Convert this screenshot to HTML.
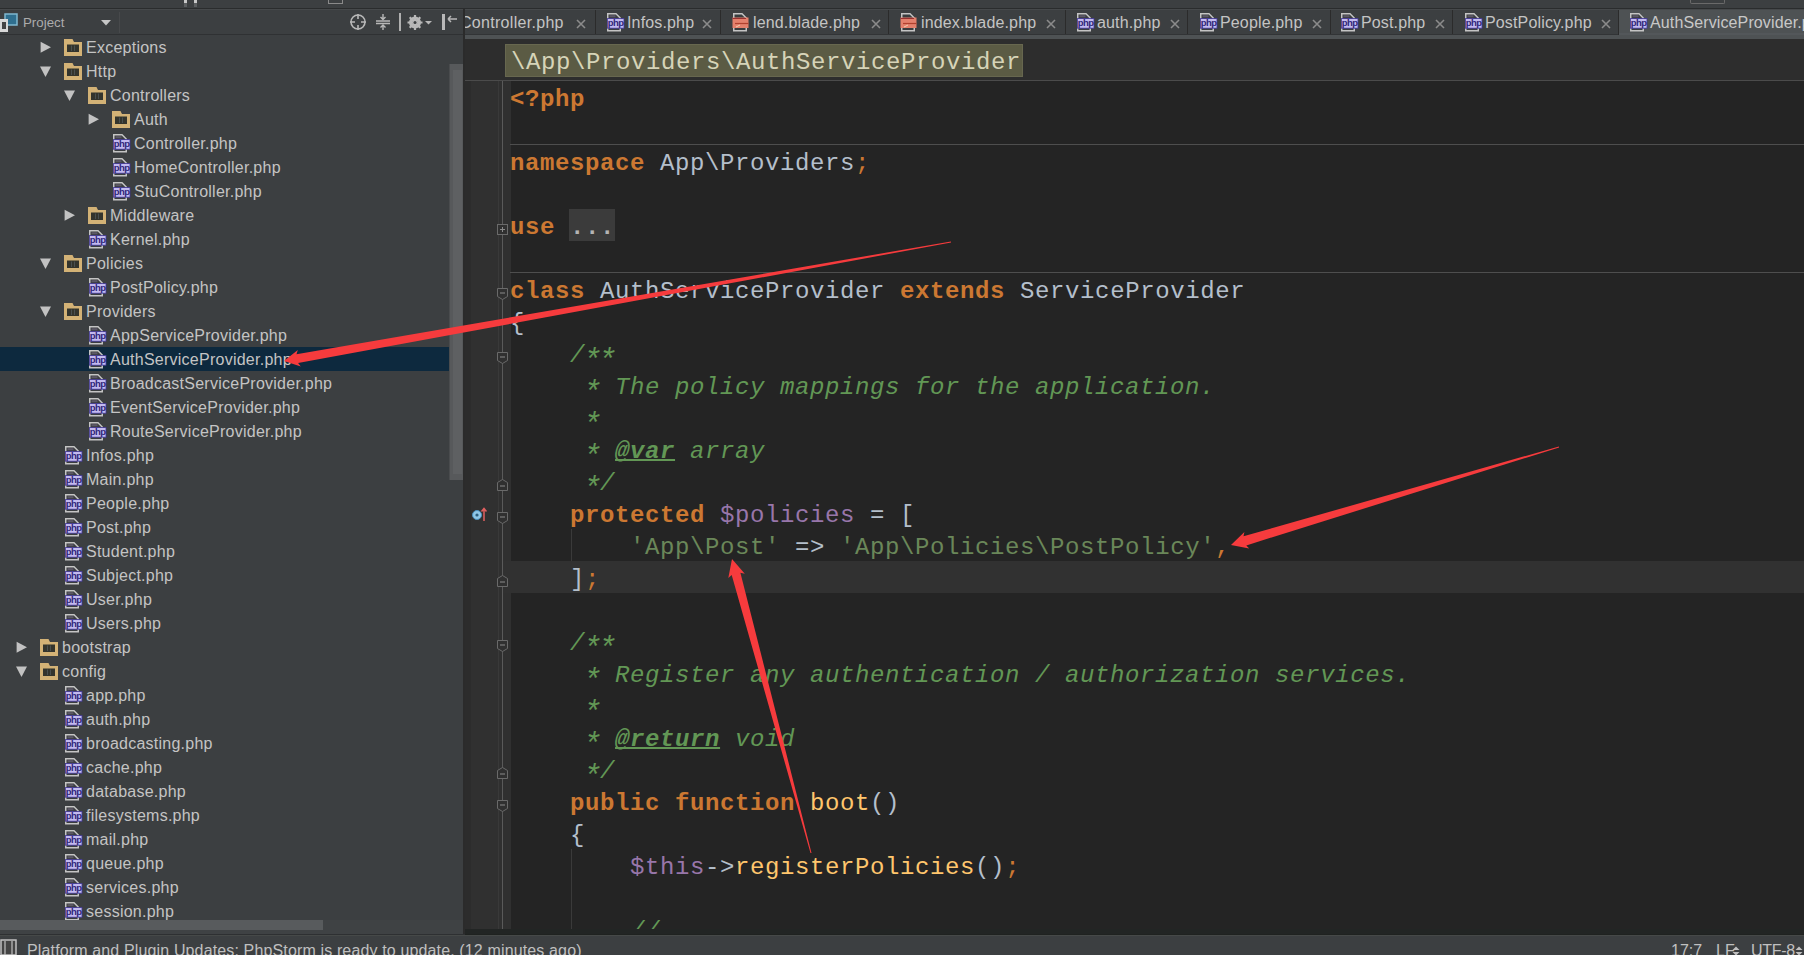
<!DOCTYPE html><html><head><meta charset="utf-8"><style>
*{margin:0;padding:0;box-sizing:border-box}
html,body{width:1804px;height:955px;overflow:hidden}
body{background:#3c3f41;position:relative;font-family:"Liberation Sans",sans-serif;color:#bbbbbb}
.a{position:absolute;display:block}
.t{position:absolute;white-space:pre;font-size:16px;line-height:20px}
.c{position:absolute;left:511px;white-space:pre;font-family:"Liberation Mono",monospace;font-size:24px;letter-spacing:0.6px;line-height:32px;height:32px;color:#b4bfcb}
.k{color:#cc7832;font-weight:bold}
.p{color:#cc7832}
.d{color:#629755;font-style:italic}
.dt{color:#629755;font-style:italic;font-weight:bold;text-decoration:underline;text-decoration-skip-ink:none;text-underline-offset:1px}
.s{color:#6a8759}
.v{color:#9876aa}
.f{color:#ffc66d}
.st{display:inline-block;width:15.003px;text-align:center;transform:translateY(6px) scale(1.3)}
</style></head><body>

<div class="a" style="left:0;top:0;width:1804px;height:8px;background:#3c3f41"></div>
<div class="a" style="left:0;top:8px;width:1804px;height:1px;background:#2a2c2d"></div>
<div class="a" style="left:184px;top:0;width:3px;height:3px;background:#c8c8c8"></div>
<div class="a" style="left:184px;top:3px;width:3px;height:4px;background:#5c5f61"></div>
<div class="a" style="left:194px;top:0;width:3px;height:3px;background:#c8c8c8"></div>
<div class="a" style="left:194px;top:3px;width:3px;height:4px;background:#5c5f61"></div>
<div class="a" style="left:328px;top:0;width:15px;height:4px;border:1px solid #8a8a8a;border-top:none"></div>
<div class="a" style="left:1690px;top:0;width:35px;height:4px;border:1px solid #6a6a6a;border-top:none;border-radius:0 0 2px 2px"></div>
<div class="a" style="left:0;top:9px;width:463px;height:26px;background:#3c3f41;border-top:1px solid #46494b;border-bottom:1px solid #2f3133"></div>
<svg class="a" style="left:0;top:13px" width="18" height="20" viewBox="0 0 18 20"><rect x="5" y="1" width="12" height="11" fill="#2f6f8f" stroke="#7fb8d0" stroke-width="1.5"/><rect x="0" y="6" width="8" height="13" fill="#d8d8d8"/><rect x="2" y="9" width="4" height="7" fill="#444"/></svg>
<div class="t" style="left:23px;top:13px;font-size:13.3px;color:#acacac">Project</div>
<svg class="a" style="left:101px;top:20px" width="10" height="6" viewBox="0 0 10 6"><path d="M0 0H10L5 5.5Z" fill="#c6c6c6"/></svg>
<div class="a" style="left:119px;top:12px;width:1px;height:21px;background:#47494b"></div>
<svg class="a" style="left:349px;top:13px" width="18" height="18" viewBox="0 0 18 18"><circle cx="9" cy="9" r="7" fill="none" stroke="#b8b8b8" stroke-width="1.6"/><path d="M9 1V6M9 12V17M1 9H6M12 9H17" stroke="#b8b8b8" stroke-width="1.6"/></svg>
<svg class="a" style="left:375px;top:13px" width="16" height="18" viewBox="0 0 16 18"><path d="M1 8H15M1 10.5H15" stroke="#b8b8b8" stroke-width="1.4"/><path d="M8 1V6M5.5 4L8 6.5L10.5 4M8 17V12.5M5.5 14.5L8 12L10.5 14.5" stroke="#b8b8b8" stroke-width="1.4" fill="none"/></svg>
<div class="a" style="left:399px;top:13px;width:2px;height:18px;background:#b0b0b0"></div>
<svg class="a" style="left:407px;top:14px" width="26" height="17" viewBox="0 0 26 17"><circle cx="8" cy="8.5" r="4.5" fill="none" stroke="#b8b8b8" stroke-width="3"/><path d="M8 1V16M0.5 8.5H15.5M2.7 3.2L13.3 13.8M13.3 3.2L2.7 13.8" stroke="#b8b8b8" stroke-width="2.2"/><circle cx="8" cy="8.5" r="1.5" fill="#3c3f41"/><path d="M18 7H25L21.5 10.5Z" fill="#b8b8b8"/></svg>
<svg class="a" style="left:441px;top:13px" width="17" height="18" viewBox="0 0 17 18"><rect x="1" y="1" width="3" height="16" fill="#b8b8b8"/><path d="M7 6H16M7 6L10 3M7 6L10 9" stroke="#b8b8b8" stroke-width="1.5" fill="none"/></svg>
<div class="a" style="left:0;top:35px;width:449px;height:885px;overflow:hidden">
<svg class="a" style="left:40px;top:6px" width="12" height="13" viewBox="0 0 12 13"><path d="M0.6 0.7L11 6.2L0.6 11.7Z" fill="#c2c2c2"/></svg>
<svg class="a" style="left:64px;top:4px" width="18" height="17" viewBox="0 0 18 17"><path d="M0 0H8.5L10 3H18V17H0Z" fill="#d3b276"/><rect x="3" y="5.5" width="12" height="7.5" fill="#33342d"/><rect x="7" y="6.5" width="1" height="5.5" fill="#4a5050"/><rect x="10" y="6.5" width="1" height="5.5" fill="#4a5050"/></svg>
<div class="t" style="left:86px;top:3px;color:#c4c4c4;letter-spacing:0.25px">Exceptions</div>
<svg class="a" style="left:40px;top:31px" width="12" height="12" viewBox="0 0 12 12"><path d="M0 0.6H11L5.5 11Z" fill="#c2c2c2"/></svg>
<svg class="a" style="left:64px;top:28px" width="18" height="17" viewBox="0 0 18 17"><path d="M0 0H8.5L10 3H18V17H0Z" fill="#d3b276"/><rect x="3" y="5.5" width="12" height="7.5" fill="#33342d"/><rect x="7" y="6.5" width="1" height="5.5" fill="#4a5050"/><rect x="10" y="6.5" width="1" height="5.5" fill="#4a5050"/></svg>
<div class="t" style="left:86px;top:27px;color:#c4c4c4;letter-spacing:0.25px">Http</div>
<svg class="a" style="left:64px;top:55px" width="12" height="12" viewBox="0 0 12 12"><path d="M0 0.6H11L5.5 11Z" fill="#c2c2c2"/></svg>
<svg class="a" style="left:88px;top:52px" width="18" height="17" viewBox="0 0 18 17"><path d="M0 0H8.5L10 3H18V17H0Z" fill="#d3b276"/><rect x="3" y="5.5" width="12" height="7.5" fill="#33342d"/><rect x="7" y="6.5" width="1" height="5.5" fill="#4a5050"/><rect x="10" y="6.5" width="1" height="5.5" fill="#4a5050"/></svg>
<div class="t" style="left:110px;top:51px;color:#c4c4c4;letter-spacing:0.25px">Controllers</div>
<svg class="a" style="left:88px;top:78px" width="12" height="13" viewBox="0 0 12 13"><path d="M0.6 0.7L11 6.2L0.6 11.7Z" fill="#c2c2c2"/></svg>
<svg class="a" style="left:112px;top:76px" width="18" height="17" viewBox="0 0 18 17"><path d="M0 0H8.5L10 3H18V17H0Z" fill="#d3b276"/><rect x="3" y="5.5" width="12" height="7.5" fill="#33342d"/><rect x="7" y="6.5" width="1" height="5.5" fill="#4a5050"/><rect x="10" y="6.5" width="1" height="5.5" fill="#4a5050"/></svg>
<div class="t" style="left:134px;top:75px;color:#c4c4c4;letter-spacing:0.25px">Auth</div>
<svg class="a" style="left:111px;top:98px" width="20" height="20" viewBox="0 0 20 20"><path d="M2.75 1.75H11L15.25 6V18.75H2.75Z" fill="#3a3d3f" stroke="#c4c4c4" stroke-width="1.5"/><rect x="4.5" y="3.2" width="6" height="2" fill="#5c5866"/><rect x="2.4" y="6.6" width="16.6" height="9.6" fill="#c3baf0" stroke="#3f3594" stroke-width="0.8"/><text x="10.7" y="14.4" font-family="Liberation Sans" font-size="9.5" font-weight="bold" fill="#30277a" text-anchor="middle" letter-spacing="-0.5">php</text></svg>
<div class="t" style="left:134px;top:99px;color:#c4c4c4;letter-spacing:0.25px">Controller.php</div>
<svg class="a" style="left:111px;top:122px" width="20" height="20" viewBox="0 0 20 20"><path d="M2.75 1.75H11L15.25 6V18.75H2.75Z" fill="#3a3d3f" stroke="#c4c4c4" stroke-width="1.5"/><rect x="4.5" y="3.2" width="6" height="2" fill="#5c5866"/><rect x="2.4" y="6.6" width="16.6" height="9.6" fill="#c3baf0" stroke="#3f3594" stroke-width="0.8"/><text x="10.7" y="14.4" font-family="Liberation Sans" font-size="9.5" font-weight="bold" fill="#30277a" text-anchor="middle" letter-spacing="-0.5">php</text></svg>
<div class="t" style="left:134px;top:123px;color:#c4c4c4;letter-spacing:0.25px">HomeController.php</div>
<svg class="a" style="left:111px;top:146px" width="20" height="20" viewBox="0 0 20 20"><path d="M2.75 1.75H11L15.25 6V18.75H2.75Z" fill="#3a3d3f" stroke="#c4c4c4" stroke-width="1.5"/><rect x="4.5" y="3.2" width="6" height="2" fill="#5c5866"/><rect x="2.4" y="6.6" width="16.6" height="9.6" fill="#c3baf0" stroke="#3f3594" stroke-width="0.8"/><text x="10.7" y="14.4" font-family="Liberation Sans" font-size="9.5" font-weight="bold" fill="#30277a" text-anchor="middle" letter-spacing="-0.5">php</text></svg>
<div class="t" style="left:134px;top:147px;color:#c4c4c4;letter-spacing:0.25px">StuController.php</div>
<svg class="a" style="left:64px;top:174px" width="12" height="13" viewBox="0 0 12 13"><path d="M0.6 0.7L11 6.2L0.6 11.7Z" fill="#c2c2c2"/></svg>
<svg class="a" style="left:88px;top:172px" width="18" height="17" viewBox="0 0 18 17"><path d="M0 0H8.5L10 3H18V17H0Z" fill="#d3b276"/><rect x="3" y="5.5" width="12" height="7.5" fill="#33342d"/><rect x="7" y="6.5" width="1" height="5.5" fill="#4a5050"/><rect x="10" y="6.5" width="1" height="5.5" fill="#4a5050"/></svg>
<div class="t" style="left:110px;top:171px;color:#c4c4c4;letter-spacing:0.25px">Middleware</div>
<svg class="a" style="left:87px;top:194px" width="20" height="20" viewBox="0 0 20 20"><path d="M2.75 1.75H11L15.25 6V18.75H2.75Z" fill="#3a3d3f" stroke="#c4c4c4" stroke-width="1.5"/><rect x="4.5" y="3.2" width="6" height="2" fill="#5c5866"/><rect x="2.4" y="6.6" width="16.6" height="9.6" fill="#c3baf0" stroke="#3f3594" stroke-width="0.8"/><text x="10.7" y="14.4" font-family="Liberation Sans" font-size="9.5" font-weight="bold" fill="#30277a" text-anchor="middle" letter-spacing="-0.5">php</text></svg>
<div class="t" style="left:110px;top:195px;color:#c4c4c4;letter-spacing:0.25px">Kernel.php</div>
<svg class="a" style="left:40px;top:223px" width="12" height="12" viewBox="0 0 12 12"><path d="M0 0.6H11L5.5 11Z" fill="#c2c2c2"/></svg>
<svg class="a" style="left:64px;top:220px" width="18" height="17" viewBox="0 0 18 17"><path d="M0 0H8.5L10 3H18V17H0Z" fill="#d3b276"/><rect x="3" y="5.5" width="12" height="7.5" fill="#33342d"/><rect x="7" y="6.5" width="1" height="5.5" fill="#4a5050"/><rect x="10" y="6.5" width="1" height="5.5" fill="#4a5050"/></svg>
<div class="t" style="left:86px;top:219px;color:#c4c4c4;letter-spacing:0.25px">Policies</div>
<svg class="a" style="left:87px;top:242px" width="20" height="20" viewBox="0 0 20 20"><path d="M2.75 1.75H11L15.25 6V18.75H2.75Z" fill="#3a3d3f" stroke="#c4c4c4" stroke-width="1.5"/><rect x="4.5" y="3.2" width="6" height="2" fill="#5c5866"/><rect x="2.4" y="6.6" width="16.6" height="9.6" fill="#c3baf0" stroke="#3f3594" stroke-width="0.8"/><text x="10.7" y="14.4" font-family="Liberation Sans" font-size="9.5" font-weight="bold" fill="#30277a" text-anchor="middle" letter-spacing="-0.5">php</text></svg>
<div class="t" style="left:110px;top:243px;color:#c4c4c4;letter-spacing:0.25px">PostPolicy.php</div>
<svg class="a" style="left:40px;top:271px" width="12" height="12" viewBox="0 0 12 12"><path d="M0 0.6H11L5.5 11Z" fill="#c2c2c2"/></svg>
<svg class="a" style="left:64px;top:268px" width="18" height="17" viewBox="0 0 18 17"><path d="M0 0H8.5L10 3H18V17H0Z" fill="#d3b276"/><rect x="3" y="5.5" width="12" height="7.5" fill="#33342d"/><rect x="7" y="6.5" width="1" height="5.5" fill="#4a5050"/><rect x="10" y="6.5" width="1" height="5.5" fill="#4a5050"/></svg>
<div class="t" style="left:86px;top:267px;color:#c4c4c4;letter-spacing:0.25px">Providers</div>
<svg class="a" style="left:87px;top:290px" width="20" height="20" viewBox="0 0 20 20"><path d="M2.75 1.75H11L15.25 6V18.75H2.75Z" fill="#3a3d3f" stroke="#c4c4c4" stroke-width="1.5"/><rect x="4.5" y="3.2" width="6" height="2" fill="#5c5866"/><rect x="2.4" y="6.6" width="16.6" height="9.6" fill="#c3baf0" stroke="#3f3594" stroke-width="0.8"/><text x="10.7" y="14.4" font-family="Liberation Sans" font-size="9.5" font-weight="bold" fill="#30277a" text-anchor="middle" letter-spacing="-0.5">php</text></svg>
<div class="t" style="left:110px;top:291px;color:#c4c4c4;letter-spacing:0.25px">AppServiceProvider.php</div>
<div class="a" style="left:0;top:312px;width:449px;height:24px;background:#0d293e"></div>
<svg class="a" style="left:87px;top:314px" width="20" height="20" viewBox="0 0 20 20"><path d="M2.75 1.75H11L15.25 6V18.75H2.75Z" fill="#3a3d3f" stroke="#c4c4c4" stroke-width="1.5"/><rect x="4.5" y="3.2" width="6" height="2" fill="#5c5866"/><rect x="2.4" y="6.6" width="16.6" height="9.6" fill="#c3baf0" stroke="#3f3594" stroke-width="0.8"/><text x="10.7" y="14.4" font-family="Liberation Sans" font-size="9.5" font-weight="bold" fill="#30277a" text-anchor="middle" letter-spacing="-0.5">php</text></svg>
<div class="t" style="left:110px;top:315px;color:#c4c4c4;letter-spacing:0.25px">AuthServiceProvider.php</div>
<svg class="a" style="left:87px;top:338px" width="20" height="20" viewBox="0 0 20 20"><path d="M2.75 1.75H11L15.25 6V18.75H2.75Z" fill="#3a3d3f" stroke="#c4c4c4" stroke-width="1.5"/><rect x="4.5" y="3.2" width="6" height="2" fill="#5c5866"/><rect x="2.4" y="6.6" width="16.6" height="9.6" fill="#c3baf0" stroke="#3f3594" stroke-width="0.8"/><text x="10.7" y="14.4" font-family="Liberation Sans" font-size="9.5" font-weight="bold" fill="#30277a" text-anchor="middle" letter-spacing="-0.5">php</text></svg>
<div class="t" style="left:110px;top:339px;color:#c4c4c4;letter-spacing:0.25px">BroadcastServiceProvider.php</div>
<svg class="a" style="left:87px;top:362px" width="20" height="20" viewBox="0 0 20 20"><path d="M2.75 1.75H11L15.25 6V18.75H2.75Z" fill="#3a3d3f" stroke="#c4c4c4" stroke-width="1.5"/><rect x="4.5" y="3.2" width="6" height="2" fill="#5c5866"/><rect x="2.4" y="6.6" width="16.6" height="9.6" fill="#c3baf0" stroke="#3f3594" stroke-width="0.8"/><text x="10.7" y="14.4" font-family="Liberation Sans" font-size="9.5" font-weight="bold" fill="#30277a" text-anchor="middle" letter-spacing="-0.5">php</text></svg>
<div class="t" style="left:110px;top:363px;color:#c4c4c4;letter-spacing:0.25px">EventServiceProvider.php</div>
<svg class="a" style="left:87px;top:386px" width="20" height="20" viewBox="0 0 20 20"><path d="M2.75 1.75H11L15.25 6V18.75H2.75Z" fill="#3a3d3f" stroke="#c4c4c4" stroke-width="1.5"/><rect x="4.5" y="3.2" width="6" height="2" fill="#5c5866"/><rect x="2.4" y="6.6" width="16.6" height="9.6" fill="#c3baf0" stroke="#3f3594" stroke-width="0.8"/><text x="10.7" y="14.4" font-family="Liberation Sans" font-size="9.5" font-weight="bold" fill="#30277a" text-anchor="middle" letter-spacing="-0.5">php</text></svg>
<div class="t" style="left:110px;top:387px;color:#c4c4c4;letter-spacing:0.25px">RouteServiceProvider.php</div>
<svg class="a" style="left:63px;top:410px" width="20" height="20" viewBox="0 0 20 20"><path d="M2.75 1.75H11L15.25 6V18.75H2.75Z" fill="#3a3d3f" stroke="#c4c4c4" stroke-width="1.5"/><rect x="4.5" y="3.2" width="6" height="2" fill="#5c5866"/><rect x="2.4" y="6.6" width="16.6" height="9.6" fill="#c3baf0" stroke="#3f3594" stroke-width="0.8"/><text x="10.7" y="14.4" font-family="Liberation Sans" font-size="9.5" font-weight="bold" fill="#30277a" text-anchor="middle" letter-spacing="-0.5">php</text></svg>
<div class="t" style="left:86px;top:411px;color:#c4c4c4;letter-spacing:0.25px">Infos.php</div>
<svg class="a" style="left:63px;top:434px" width="20" height="20" viewBox="0 0 20 20"><path d="M2.75 1.75H11L15.25 6V18.75H2.75Z" fill="#3a3d3f" stroke="#c4c4c4" stroke-width="1.5"/><rect x="4.5" y="3.2" width="6" height="2" fill="#5c5866"/><rect x="2.4" y="6.6" width="16.6" height="9.6" fill="#c3baf0" stroke="#3f3594" stroke-width="0.8"/><text x="10.7" y="14.4" font-family="Liberation Sans" font-size="9.5" font-weight="bold" fill="#30277a" text-anchor="middle" letter-spacing="-0.5">php</text></svg>
<div class="t" style="left:86px;top:435px;color:#c4c4c4;letter-spacing:0.25px">Main.php</div>
<svg class="a" style="left:63px;top:458px" width="20" height="20" viewBox="0 0 20 20"><path d="M2.75 1.75H11L15.25 6V18.75H2.75Z" fill="#3a3d3f" stroke="#c4c4c4" stroke-width="1.5"/><rect x="4.5" y="3.2" width="6" height="2" fill="#5c5866"/><rect x="2.4" y="6.6" width="16.6" height="9.6" fill="#c3baf0" stroke="#3f3594" stroke-width="0.8"/><text x="10.7" y="14.4" font-family="Liberation Sans" font-size="9.5" font-weight="bold" fill="#30277a" text-anchor="middle" letter-spacing="-0.5">php</text></svg>
<div class="t" style="left:86px;top:459px;color:#c4c4c4;letter-spacing:0.25px">People.php</div>
<svg class="a" style="left:63px;top:482px" width="20" height="20" viewBox="0 0 20 20"><path d="M2.75 1.75H11L15.25 6V18.75H2.75Z" fill="#3a3d3f" stroke="#c4c4c4" stroke-width="1.5"/><rect x="4.5" y="3.2" width="6" height="2" fill="#5c5866"/><rect x="2.4" y="6.6" width="16.6" height="9.6" fill="#c3baf0" stroke="#3f3594" stroke-width="0.8"/><text x="10.7" y="14.4" font-family="Liberation Sans" font-size="9.5" font-weight="bold" fill="#30277a" text-anchor="middle" letter-spacing="-0.5">php</text></svg>
<div class="t" style="left:86px;top:483px;color:#c4c4c4;letter-spacing:0.25px">Post.php</div>
<svg class="a" style="left:63px;top:506px" width="20" height="20" viewBox="0 0 20 20"><path d="M2.75 1.75H11L15.25 6V18.75H2.75Z" fill="#3a3d3f" stroke="#c4c4c4" stroke-width="1.5"/><rect x="4.5" y="3.2" width="6" height="2" fill="#5c5866"/><rect x="2.4" y="6.6" width="16.6" height="9.6" fill="#c3baf0" stroke="#3f3594" stroke-width="0.8"/><text x="10.7" y="14.4" font-family="Liberation Sans" font-size="9.5" font-weight="bold" fill="#30277a" text-anchor="middle" letter-spacing="-0.5">php</text></svg>
<div class="t" style="left:86px;top:507px;color:#c4c4c4;letter-spacing:0.25px">Student.php</div>
<svg class="a" style="left:63px;top:530px" width="20" height="20" viewBox="0 0 20 20"><path d="M2.75 1.75H11L15.25 6V18.75H2.75Z" fill="#3a3d3f" stroke="#c4c4c4" stroke-width="1.5"/><rect x="4.5" y="3.2" width="6" height="2" fill="#5c5866"/><rect x="2.4" y="6.6" width="16.6" height="9.6" fill="#c3baf0" stroke="#3f3594" stroke-width="0.8"/><text x="10.7" y="14.4" font-family="Liberation Sans" font-size="9.5" font-weight="bold" fill="#30277a" text-anchor="middle" letter-spacing="-0.5">php</text></svg>
<div class="t" style="left:86px;top:531px;color:#c4c4c4;letter-spacing:0.25px">Subject.php</div>
<svg class="a" style="left:63px;top:554px" width="20" height="20" viewBox="0 0 20 20"><path d="M2.75 1.75H11L15.25 6V18.75H2.75Z" fill="#3a3d3f" stroke="#c4c4c4" stroke-width="1.5"/><rect x="4.5" y="3.2" width="6" height="2" fill="#5c5866"/><rect x="2.4" y="6.6" width="16.6" height="9.6" fill="#c3baf0" stroke="#3f3594" stroke-width="0.8"/><text x="10.7" y="14.4" font-family="Liberation Sans" font-size="9.5" font-weight="bold" fill="#30277a" text-anchor="middle" letter-spacing="-0.5">php</text></svg>
<div class="t" style="left:86px;top:555px;color:#c4c4c4;letter-spacing:0.25px">User.php</div>
<svg class="a" style="left:63px;top:578px" width="20" height="20" viewBox="0 0 20 20"><path d="M2.75 1.75H11L15.25 6V18.75H2.75Z" fill="#3a3d3f" stroke="#c4c4c4" stroke-width="1.5"/><rect x="4.5" y="3.2" width="6" height="2" fill="#5c5866"/><rect x="2.4" y="6.6" width="16.6" height="9.6" fill="#c3baf0" stroke="#3f3594" stroke-width="0.8"/><text x="10.7" y="14.4" font-family="Liberation Sans" font-size="9.5" font-weight="bold" fill="#30277a" text-anchor="middle" letter-spacing="-0.5">php</text></svg>
<div class="t" style="left:86px;top:579px;color:#c4c4c4;letter-spacing:0.25px">Users.php</div>
<svg class="a" style="left:16px;top:606px" width="12" height="13" viewBox="0 0 12 13"><path d="M0.6 0.7L11 6.2L0.6 11.7Z" fill="#c2c2c2"/></svg>
<svg class="a" style="left:40px;top:604px" width="18" height="17" viewBox="0 0 18 17"><path d="M0 0H8.5L10 3H18V17H0Z" fill="#d3b276"/><rect x="3" y="5.5" width="12" height="7.5" fill="#33342d"/><rect x="7" y="6.5" width="1" height="5.5" fill="#4a5050"/><rect x="10" y="6.5" width="1" height="5.5" fill="#4a5050"/></svg>
<div class="t" style="left:62px;top:603px;color:#c4c4c4;letter-spacing:0.25px">bootstrap</div>
<svg class="a" style="left:16px;top:631px" width="12" height="12" viewBox="0 0 12 12"><path d="M0 0.6H11L5.5 11Z" fill="#c2c2c2"/></svg>
<svg class="a" style="left:40px;top:628px" width="18" height="17" viewBox="0 0 18 17"><path d="M0 0H8.5L10 3H18V17H0Z" fill="#d3b276"/><rect x="3" y="5.5" width="12" height="7.5" fill="#33342d"/><rect x="7" y="6.5" width="1" height="5.5" fill="#4a5050"/><rect x="10" y="6.5" width="1" height="5.5" fill="#4a5050"/></svg>
<div class="t" style="left:62px;top:627px;color:#c4c4c4;letter-spacing:0.25px">config</div>
<svg class="a" style="left:63px;top:650px" width="20" height="20" viewBox="0 0 20 20"><path d="M2.75 1.75H11L15.25 6V18.75H2.75Z" fill="#3a3d3f" stroke="#c4c4c4" stroke-width="1.5"/><rect x="4.5" y="3.2" width="6" height="2" fill="#5c5866"/><rect x="2.4" y="6.6" width="16.6" height="9.6" fill="#c3baf0" stroke="#3f3594" stroke-width="0.8"/><text x="10.7" y="14.4" font-family="Liberation Sans" font-size="9.5" font-weight="bold" fill="#30277a" text-anchor="middle" letter-spacing="-0.5">php</text></svg>
<div class="t" style="left:86px;top:651px;color:#c4c4c4;letter-spacing:0.25px">app.php</div>
<svg class="a" style="left:63px;top:674px" width="20" height="20" viewBox="0 0 20 20"><path d="M2.75 1.75H11L15.25 6V18.75H2.75Z" fill="#3a3d3f" stroke="#c4c4c4" stroke-width="1.5"/><rect x="4.5" y="3.2" width="6" height="2" fill="#5c5866"/><rect x="2.4" y="6.6" width="16.6" height="9.6" fill="#c3baf0" stroke="#3f3594" stroke-width="0.8"/><text x="10.7" y="14.4" font-family="Liberation Sans" font-size="9.5" font-weight="bold" fill="#30277a" text-anchor="middle" letter-spacing="-0.5">php</text></svg>
<div class="t" style="left:86px;top:675px;color:#c4c4c4;letter-spacing:0.25px">auth.php</div>
<svg class="a" style="left:63px;top:698px" width="20" height="20" viewBox="0 0 20 20"><path d="M2.75 1.75H11L15.25 6V18.75H2.75Z" fill="#3a3d3f" stroke="#c4c4c4" stroke-width="1.5"/><rect x="4.5" y="3.2" width="6" height="2" fill="#5c5866"/><rect x="2.4" y="6.6" width="16.6" height="9.6" fill="#c3baf0" stroke="#3f3594" stroke-width="0.8"/><text x="10.7" y="14.4" font-family="Liberation Sans" font-size="9.5" font-weight="bold" fill="#30277a" text-anchor="middle" letter-spacing="-0.5">php</text></svg>
<div class="t" style="left:86px;top:699px;color:#c4c4c4;letter-spacing:0.25px">broadcasting.php</div>
<svg class="a" style="left:63px;top:722px" width="20" height="20" viewBox="0 0 20 20"><path d="M2.75 1.75H11L15.25 6V18.75H2.75Z" fill="#3a3d3f" stroke="#c4c4c4" stroke-width="1.5"/><rect x="4.5" y="3.2" width="6" height="2" fill="#5c5866"/><rect x="2.4" y="6.6" width="16.6" height="9.6" fill="#c3baf0" stroke="#3f3594" stroke-width="0.8"/><text x="10.7" y="14.4" font-family="Liberation Sans" font-size="9.5" font-weight="bold" fill="#30277a" text-anchor="middle" letter-spacing="-0.5">php</text></svg>
<div class="t" style="left:86px;top:723px;color:#c4c4c4;letter-spacing:0.25px">cache.php</div>
<svg class="a" style="left:63px;top:746px" width="20" height="20" viewBox="0 0 20 20"><path d="M2.75 1.75H11L15.25 6V18.75H2.75Z" fill="#3a3d3f" stroke="#c4c4c4" stroke-width="1.5"/><rect x="4.5" y="3.2" width="6" height="2" fill="#5c5866"/><rect x="2.4" y="6.6" width="16.6" height="9.6" fill="#c3baf0" stroke="#3f3594" stroke-width="0.8"/><text x="10.7" y="14.4" font-family="Liberation Sans" font-size="9.5" font-weight="bold" fill="#30277a" text-anchor="middle" letter-spacing="-0.5">php</text></svg>
<div class="t" style="left:86px;top:747px;color:#c4c4c4;letter-spacing:0.25px">database.php</div>
<svg class="a" style="left:63px;top:770px" width="20" height="20" viewBox="0 0 20 20"><path d="M2.75 1.75H11L15.25 6V18.75H2.75Z" fill="#3a3d3f" stroke="#c4c4c4" stroke-width="1.5"/><rect x="4.5" y="3.2" width="6" height="2" fill="#5c5866"/><rect x="2.4" y="6.6" width="16.6" height="9.6" fill="#c3baf0" stroke="#3f3594" stroke-width="0.8"/><text x="10.7" y="14.4" font-family="Liberation Sans" font-size="9.5" font-weight="bold" fill="#30277a" text-anchor="middle" letter-spacing="-0.5">php</text></svg>
<div class="t" style="left:86px;top:771px;color:#c4c4c4;letter-spacing:0.25px">filesystems.php</div>
<svg class="a" style="left:63px;top:794px" width="20" height="20" viewBox="0 0 20 20"><path d="M2.75 1.75H11L15.25 6V18.75H2.75Z" fill="#3a3d3f" stroke="#c4c4c4" stroke-width="1.5"/><rect x="4.5" y="3.2" width="6" height="2" fill="#5c5866"/><rect x="2.4" y="6.6" width="16.6" height="9.6" fill="#c3baf0" stroke="#3f3594" stroke-width="0.8"/><text x="10.7" y="14.4" font-family="Liberation Sans" font-size="9.5" font-weight="bold" fill="#30277a" text-anchor="middle" letter-spacing="-0.5">php</text></svg>
<div class="t" style="left:86px;top:795px;color:#c4c4c4;letter-spacing:0.25px">mail.php</div>
<svg class="a" style="left:63px;top:818px" width="20" height="20" viewBox="0 0 20 20"><path d="M2.75 1.75H11L15.25 6V18.75H2.75Z" fill="#3a3d3f" stroke="#c4c4c4" stroke-width="1.5"/><rect x="4.5" y="3.2" width="6" height="2" fill="#5c5866"/><rect x="2.4" y="6.6" width="16.6" height="9.6" fill="#c3baf0" stroke="#3f3594" stroke-width="0.8"/><text x="10.7" y="14.4" font-family="Liberation Sans" font-size="9.5" font-weight="bold" fill="#30277a" text-anchor="middle" letter-spacing="-0.5">php</text></svg>
<div class="t" style="left:86px;top:819px;color:#c4c4c4;letter-spacing:0.25px">queue.php</div>
<svg class="a" style="left:63px;top:842px" width="20" height="20" viewBox="0 0 20 20"><path d="M2.75 1.75H11L15.25 6V18.75H2.75Z" fill="#3a3d3f" stroke="#c4c4c4" stroke-width="1.5"/><rect x="4.5" y="3.2" width="6" height="2" fill="#5c5866"/><rect x="2.4" y="6.6" width="16.6" height="9.6" fill="#c3baf0" stroke="#3f3594" stroke-width="0.8"/><text x="10.7" y="14.4" font-family="Liberation Sans" font-size="9.5" font-weight="bold" fill="#30277a" text-anchor="middle" letter-spacing="-0.5">php</text></svg>
<div class="t" style="left:86px;top:843px;color:#c4c4c4;letter-spacing:0.25px">services.php</div>
<svg class="a" style="left:63px;top:866px" width="20" height="20" viewBox="0 0 20 20"><path d="M2.75 1.75H11L15.25 6V18.75H2.75Z" fill="#3a3d3f" stroke="#c4c4c4" stroke-width="1.5"/><rect x="4.5" y="3.2" width="6" height="2" fill="#5c5866"/><rect x="2.4" y="6.6" width="16.6" height="9.6" fill="#c3baf0" stroke="#3f3594" stroke-width="0.8"/><text x="10.7" y="14.4" font-family="Liberation Sans" font-size="9.5" font-weight="bold" fill="#30277a" text-anchor="middle" letter-spacing="-0.5">php</text></svg>
<div class="t" style="left:86px;top:867px;color:#c4c4c4;letter-spacing:0.25px">session.php</div>
</div>
<div class="a" style="left:449px;top:64px;width:14px;height:416px;background:#57595b;border-left:1px solid #4a4c4e"></div>
<div class="a" style="left:453px;top:70px;width:9px;height:404px;background:#5e6062"></div>
<div class="a" style="left:0;top:920px;width:463px;height:14px;background:#3f4244"></div>
<div class="a" style="left:0;top:920px;width:323px;height:10px;background:#585b5d"></div>
<div class="a" style="left:463px;top:9px;width:2px;height:926px;background:#2b2b2b"></div>
<div class="a" style="left:465px;top:9px;width:1339px;height:26px;background:#3c3f41;border-top:1px solid #46494b;overflow:hidden">
<div class="a" style="left:1154px;top:0;width:185px;height:26px;background:#4e5254"></div>
<div class="t" style="left:-5px;top:3px;color:#c4c4c4;letter-spacing:0.3px">Controller.php</div>
<svg class="a" style="left:111px;top:9px" width="10" height="10" viewBox="0 0 10 10"><path d="M1 1L9 9M9 1L1 9" stroke="#8b8b8b" stroke-width="1.6"/></svg>
<div class="a" style="left:130px;top:0;width:1px;height:26px;background:#2b2b2b"></div>
<svg class="a" style="left:140px;top:2px" width="20" height="20" viewBox="0 0 20 20"><path d="M2.75 1.75H11L15.25 6V18.75H2.75Z" fill="#3a3d3f" stroke="#c4c4c4" stroke-width="1.5"/><rect x="4.5" y="3.2" width="6" height="2" fill="#5c5866"/><rect x="2.4" y="6.6" width="16.6" height="9.6" fill="#c3baf0" stroke="#3f3594" stroke-width="0.8"/><text x="10.7" y="14.4" font-family="Liberation Sans" font-size="9.5" font-weight="bold" fill="#30277a" text-anchor="middle" letter-spacing="-0.5">php</text></svg>
<div class="t" style="left:162px;top:3px;color:#c4c4c4;letter-spacing:0.15px">Infos.php</div>
<svg class="a" style="left:237px;top:9px" width="10" height="10" viewBox="0 0 10 10"><path d="M1 1L9 9M9 1L1 9" stroke="#8b8b8b" stroke-width="1.6"/></svg>
<div class="a" style="left:255px;top:0;width:1px;height:26px;background:#2b2b2b"></div>
<svg class="a" style="left:266px;top:2px" width="20" height="20" viewBox="0 0 20 20"><path d="M2.75 1.75H11L15.25 6V18.75H2.75Z" fill="#3a3d3f" stroke="#c4c4c4" stroke-width="1.5"/><rect x="1.5" y="5.5" width="16" height="10.5" fill="#e4806c"/><path d="M1.5 6.5H15" stroke="#9a3030" stroke-width="1"/><path d="M4 11.5H17.5" stroke="#b0402e" stroke-width="1.2"/><path d="M5 15L9 13" stroke="#f0d0b0" stroke-width="1"/></svg>
<div class="t" style="left:288px;top:3px;color:#c4c4c4;letter-spacing:0.15px">lend.blade.php</div>
<svg class="a" style="left:406px;top:9px" width="10" height="10" viewBox="0 0 10 10"><path d="M1 1L9 9M9 1L1 9" stroke="#8b8b8b" stroke-width="1.6"/></svg>
<div class="a" style="left:423px;top:0;width:1px;height:26px;background:#2b2b2b"></div>
<svg class="a" style="left:434px;top:2px" width="20" height="20" viewBox="0 0 20 20"><path d="M2.75 1.75H11L15.25 6V18.75H2.75Z" fill="#3a3d3f" stroke="#c4c4c4" stroke-width="1.5"/><rect x="1.5" y="5.5" width="16" height="10.5" fill="#e4806c"/><path d="M1.5 6.5H15" stroke="#9a3030" stroke-width="1"/><path d="M4 11.5H17.5" stroke="#b0402e" stroke-width="1.2"/><path d="M5 15L9 13" stroke="#f0d0b0" stroke-width="1"/></svg>
<div class="t" style="left:456px;top:3px;color:#c4c4c4;letter-spacing:0.15px">index.blade.php</div>
<svg class="a" style="left:581px;top:9px" width="10" height="10" viewBox="0 0 10 10"><path d="M1 1L9 9M9 1L1 9" stroke="#8b8b8b" stroke-width="1.6"/></svg>
<div class="a" style="left:600px;top:0;width:1px;height:26px;background:#2b2b2b"></div>
<svg class="a" style="left:610px;top:2px" width="20" height="20" viewBox="0 0 20 20"><path d="M2.75 1.75H11L15.25 6V18.75H2.75Z" fill="#3a3d3f" stroke="#c4c4c4" stroke-width="1.5"/><rect x="4.5" y="3.2" width="6" height="2" fill="#5c5866"/><rect x="2.4" y="6.6" width="16.6" height="9.6" fill="#c3baf0" stroke="#3f3594" stroke-width="0.8"/><text x="10.7" y="14.4" font-family="Liberation Sans" font-size="9.5" font-weight="bold" fill="#30277a" text-anchor="middle" letter-spacing="-0.5">php</text></svg>
<div class="t" style="left:632px;top:3px;color:#c4c4c4;letter-spacing:0.15px">auth.php</div>
<svg class="a" style="left:705px;top:9px" width="10" height="10" viewBox="0 0 10 10"><path d="M1 1L9 9M9 1L1 9" stroke="#8b8b8b" stroke-width="1.6"/></svg>
<div class="a" style="left:722px;top:0;width:1px;height:26px;background:#2b2b2b"></div>
<svg class="a" style="left:733px;top:2px" width="20" height="20" viewBox="0 0 20 20"><path d="M2.75 1.75H11L15.25 6V18.75H2.75Z" fill="#3a3d3f" stroke="#c4c4c4" stroke-width="1.5"/><rect x="4.5" y="3.2" width="6" height="2" fill="#5c5866"/><rect x="2.4" y="6.6" width="16.6" height="9.6" fill="#c3baf0" stroke="#3f3594" stroke-width="0.8"/><text x="10.7" y="14.4" font-family="Liberation Sans" font-size="9.5" font-weight="bold" fill="#30277a" text-anchor="middle" letter-spacing="-0.5">php</text></svg>
<div class="t" style="left:755px;top:3px;color:#c4c4c4;letter-spacing:0.15px">People.php</div>
<svg class="a" style="left:847px;top:9px" width="10" height="10" viewBox="0 0 10 10"><path d="M1 1L9 9M9 1L1 9" stroke="#8b8b8b" stroke-width="1.6"/></svg>
<div class="a" style="left:865px;top:0;width:1px;height:26px;background:#2b2b2b"></div>
<svg class="a" style="left:874px;top:2px" width="20" height="20" viewBox="0 0 20 20"><path d="M2.75 1.75H11L15.25 6V18.75H2.75Z" fill="#3a3d3f" stroke="#c4c4c4" stroke-width="1.5"/><rect x="4.5" y="3.2" width="6" height="2" fill="#5c5866"/><rect x="2.4" y="6.6" width="16.6" height="9.6" fill="#c3baf0" stroke="#3f3594" stroke-width="0.8"/><text x="10.7" y="14.4" font-family="Liberation Sans" font-size="9.5" font-weight="bold" fill="#30277a" text-anchor="middle" letter-spacing="-0.5">php</text></svg>
<div class="t" style="left:896px;top:3px;color:#c4c4c4;letter-spacing:0.15px">Post.php</div>
<svg class="a" style="left:970px;top:9px" width="10" height="10" viewBox="0 0 10 10"><path d="M1 1L9 9M9 1L1 9" stroke="#8b8b8b" stroke-width="1.6"/></svg>
<div class="a" style="left:987px;top:0;width:1px;height:26px;background:#2b2b2b"></div>
<svg class="a" style="left:998px;top:2px" width="20" height="20" viewBox="0 0 20 20"><path d="M2.75 1.75H11L15.25 6V18.75H2.75Z" fill="#3a3d3f" stroke="#c4c4c4" stroke-width="1.5"/><rect x="4.5" y="3.2" width="6" height="2" fill="#5c5866"/><rect x="2.4" y="6.6" width="16.6" height="9.6" fill="#c3baf0" stroke="#3f3594" stroke-width="0.8"/><text x="10.7" y="14.4" font-family="Liberation Sans" font-size="9.5" font-weight="bold" fill="#30277a" text-anchor="middle" letter-spacing="-0.5">php</text></svg>
<div class="t" style="left:1020px;top:3px;color:#c4c4c4;letter-spacing:0.15px">PostPolicy.php</div>
<svg class="a" style="left:1136px;top:9px" width="10" height="10" viewBox="0 0 10 10"><path d="M1 1L9 9M9 1L1 9" stroke="#8b8b8b" stroke-width="1.6"/></svg>
<div class="a" style="left:1153px;top:0;width:1px;height:26px;background:#2b2b2b"></div>
<svg class="a" style="left:1163px;top:2px" width="20" height="20" viewBox="0 0 20 20"><path d="M2.75 1.75H11L15.25 6V18.75H2.75Z" fill="#3a3d3f" stroke="#c4c4c4" stroke-width="1.5"/><rect x="4.5" y="3.2" width="6" height="2" fill="#5c5866"/><rect x="2.4" y="6.6" width="16.6" height="9.6" fill="#c3baf0" stroke="#3f3594" stroke-width="0.8"/><text x="10.7" y="14.4" font-family="Liberation Sans" font-size="9.5" font-weight="bold" fill="#30277a" text-anchor="middle" letter-spacing="-0.5">php</text></svg>
<div class="t" style="left:1185px;top:3px;color:#c8c8c8;letter-spacing:0.12px">AuthServiceProvider.php</div>
</div>
<div class="a" style="left:465px;top:34px;width:1153px;height:1px;background:#323436"></div>
<div class="a" style="left:1619px;top:33px;width:185px;height:2px;background:#53575a"></div>
<div class="a" style="left:465px;top:35px;width:1339px;height:4px;background:#4e5254"></div>
<div class="a" style="left:465px;top:39px;width:1339px;height:41px;background:#2d2d2d"></div>
<div class="a" style="left:505px;top:44px;width:518px;height:33px;background:#5b5b44;border:1px solid #67674f"></div>
<div class="c" style="left:511px;top:47px;color:#d6d4b8;font-weight:normal">\App\Providers\AuthServiceProvider</div>
<div class="a" style="left:465px;top:80px;width:1339px;height:1px;background:#4b4b4b"></div>
<div class="a" style="left:465px;top:81px;width:46px;height:848px;background:#303030"></div>
<div class="a" style="left:511px;top:81px;width:1293px;height:848px;background:#242424"></div>
<div class="a" style="left:503px;top:561px;width:1301px;height:32px;background:#313131"></div>
<div class="a" style="left:502px;top:81px;width:1px;height:848px;background:#5a5a5a"></div>
<div class="a" style="left:465px;top:81px;width:6px;height:848px;background:#2c2c2c"></div>
<div class="a" style="left:498px;top:81px;width:1px;height:848px;background:#393939"></div>
<div class="a" style="left:510px;top:144px;width:1294px;height:1px;background:#4e4e4e"></div>
<div class="a" style="left:510px;top:272px;width:1294px;height:1px;background:#4e4e4e"></div>
<div class="a" style="left:571px;top:529px;width:1px;height:32px;background:#3a3a3a"></div>
<div class="a" style="left:571px;top:849px;width:1px;height:80px;background:#3a3a3a"></div>
<div class="a" style="left:569px;top:209px;width:46px;height:32px;background:#3b3b3b"></div>
<svg class="a" style="left:496px;top:223px" width="13" height="13" viewBox="0 0 13 13"><rect x="1.5" y="1.5" width="10" height="10" fill="#303030" stroke="#6a6a6a"/><path d="M4 6.5H9M6.5 4V9" stroke="#8a8a8a"/></svg>
<svg class="a" style="left:496px;top:287px" width="13" height="14" viewBox="0 0 13 14"><path d="M1.5 1.5H11.5V9.5L6.5 12.5L1.5 9.5Z" fill="#303030" stroke="#6a6a6a"/><path d="M4 6H9" stroke="#8a8a8a"/></svg>
<svg class="a" style="left:496px;top:351px" width="13" height="14" viewBox="0 0 13 14"><path d="M1.5 1.5H11.5V9.5L6.5 12.5L1.5 9.5Z" fill="#303030" stroke="#6a6a6a"/><path d="M4 6H9" stroke="#8a8a8a"/></svg>
<svg class="a" style="left:496px;top:478px" width="13" height="14" viewBox="0 0 13 14"><path d="M1.5 12.5H11.5V4.5L6.5 1.5L1.5 4.5Z" fill="#303030" stroke="#6a6a6a"/><path d="M4 8H9" stroke="#8a8a8a"/></svg>
<svg class="a" style="left:496px;top:511px" width="13" height="14" viewBox="0 0 13 14"><path d="M1.5 1.5H11.5V9.5L6.5 12.5L1.5 9.5Z" fill="#303030" stroke="#6a6a6a"/><path d="M4 6H9" stroke="#8a8a8a"/></svg>
<svg class="a" style="left:496px;top:574px" width="13" height="14" viewBox="0 0 13 14"><path d="M1.5 12.5H11.5V4.5L6.5 1.5L1.5 4.5Z" fill="#303030" stroke="#6a6a6a"/><path d="M4 8H9" stroke="#8a8a8a"/></svg>
<svg class="a" style="left:496px;top:639px" width="13" height="14" viewBox="0 0 13 14"><path d="M1.5 1.5H11.5V9.5L6.5 12.5L1.5 9.5Z" fill="#303030" stroke="#6a6a6a"/><path d="M4 6H9" stroke="#8a8a8a"/></svg>
<svg class="a" style="left:496px;top:766px" width="13" height="14" viewBox="0 0 13 14"><path d="M1.5 12.5H11.5V4.5L6.5 1.5L1.5 4.5Z" fill="#303030" stroke="#6a6a6a"/><path d="M4 8H9" stroke="#8a8a8a"/></svg>
<svg class="a" style="left:496px;top:799px" width="13" height="14" viewBox="0 0 13 14"><path d="M1.5 1.5H11.5V9.5L6.5 12.5L1.5 9.5Z" fill="#303030" stroke="#6a6a6a"/><path d="M4 6H9" stroke="#8a8a8a"/></svg>
<svg class="a" style="left:471px;top:506px" width="16" height="16" viewBox="0 0 16 16"><circle cx="6" cy="9" r="4.5" fill="#8fc6e6" stroke="#4a90c0" stroke-width="1"/><circle cx="6" cy="9" r="1.6" fill="#2c5f80"/><path d="M13 15V3M10.5 5.5L13 2.5L15.5 5.5" stroke="#e06060" stroke-width="1.5" fill="none"/></svg>
<div class="a" style="left:510px;top:81px;width:1294px;height:848px;overflow:hidden">
<div class="c" style="left:0px;top:3px"><span class="k">&lt;?php</span></div>
<div class="c" style="left:0px;top:67px"><span class="k">namespace</span> App\Providers<span class="p">;</span></div>
<div class="c" style="left:0px;top:131px"><span class="k">use</span> <span style="color:#b4b4b4;font-weight:bold">...</span></div>
<div class="c" style="left:0px;top:195px"><span class="k">class</span> AuthServiceProvider <span class="k">extends</span> ServiceProvider</div>
<div class="c" style="left:0px;top:227px">{</div>
<div class="c" style="left:0px;top:259px">    <span class="d">/<span class="st">*</span><span class="st">*</span></span></div>
<div class="c" style="left:0px;top:291px"><span class="d">     <span class="st">*</span> The policy mappings for the application.</span></div>
<div class="c" style="left:0px;top:323px"><span class="d">     <span class="st">*</span></span></div>
<div class="c" style="left:0px;top:355px"><span class="d">     <span class="st">*</span> </span><span class="dt">@var</span><span class="d"> array</span></div>
<div class="c" style="left:0px;top:387px"><span class="d">     <span class="st">*</span>/</span></div>
<div class="c" style="left:0px;top:419px">    <span class="k">protected</span> <span class="v">$policies</span> = [</div>
<div class="c" style="left:0px;top:451px">        <span class="s">'App\Post'</span> =&gt; <span class="s">'App\Policies\PostPolicy'</span><span class="p">,</span></div>
<div class="c" style="left:0px;top:483px">    ]<span class="p">;</span></div>
<div class="c" style="left:0px;top:547px">    <span class="d">/<span class="st">*</span><span class="st">*</span></span></div>
<div class="c" style="left:0px;top:579px"><span class="d">     <span class="st">*</span> Register any authentication / authorization services.</span></div>
<div class="c" style="left:0px;top:611px"><span class="d">     <span class="st">*</span></span></div>
<div class="c" style="left:0px;top:643px"><span class="d">     <span class="st">*</span> </span><span class="dt">@return</span><span class="d"> void</span></div>
<div class="c" style="left:0px;top:675px"><span class="d">     <span class="st">*</span>/</span></div>
<div class="c" style="left:0px;top:707px">    <span class="k">public</span> <span class="k">function</span> <span class="f">boot</span>()</div>
<div class="c" style="left:0px;top:739px">    {</div>
<div class="c" style="left:0px;top:771px">        <span class="v">$this</span>-&gt;<span class="f">registerPolicies</span>()<span class="p">;</span></div>
<div class="c" style="left:0px;top:835px">        <span class="d">//</span></div>
</div>
<div class="a" style="left:465px;top:929px;width:1339px;height:6px;background:#222524;border-bottom:1px solid #1f2220"></div>
<div class="a" style="left:0;top:934px;width:465px;height:1px;background:#2e3032"></div>
<div class="a" style="left:0;top:935px;width:1804px;height:20px;background:#3c3f41;border-top:1px solid #464948"></div>
<svg class="a" style="left:0;top:939px" width="18" height="16" viewBox="0 0 18 16"><rect x="1" y="1" width="15" height="15" fill="#444" stroke="#c0c0c0" stroke-width="1.5"/><path d="M5 2V16M12 2V16" stroke="#c0c0c0" stroke-width="1.2"/></svg>
<div class="t" style="left:27px;top:941px;color:#c0c0c0;letter-spacing:0.14px">Platform and Plugin Updates: PhpStorm is ready to update. (12 minutes ago)</div>
<div class="t" style="left:1671px;top:941px;color:#c0c0c0">17:7</div>
<div class="t" style="left:1716px;top:941px;color:#c0c0c0">LF</div>
<div class="t" style="left:1751px;top:941px;color:#c0c0c0;letter-spacing:-0.3px">UTF-8</div>
<svg class="a" style="left:1732px;top:946px" width="8" height="11" viewBox="0 0 8 11"><path d="M0.5 4L4 0.5L7.5 4ZM0.5 6L4 9.5L7.5 6Z" fill="#c0c0c0"/></svg>
<svg class="a" style="left:1795px;top:946px" width="8" height="11" viewBox="0 0 8 11"><path d="M0.5 4L4 0.5L7.5 4ZM0.5 6L4 9.5L7.5 6Z" fill="#c0c0c0"/></svg>
<svg class="a" style="left:0;top:0" width="1804" height="955" viewBox="0 0 1804 955">
<path d="M950.9 241.5 L296.5 354.2 L297.8 349.9 L284.0 361.0 L300.8 366.6 L298.1 363.1 L951.1 242.5Z" fill="#f63b3d"/>
<path d="M1558.9 446.5 L1243.5 536.3 L1244.4 532.1 L1231.0 545.0 L1249.2 548.4 L1246.3 545.4 L1559.1 447.5Z" fill="#f63b3d"/>
<path d="M811.5 852.9 L740.4 572.8 L744.8 573.7 L732.0 559.0 L728.3 578.1 L731.7 575.1 L810.5 853.1Z" fill="#f63b3d"/>
</svg>
</body></html>
